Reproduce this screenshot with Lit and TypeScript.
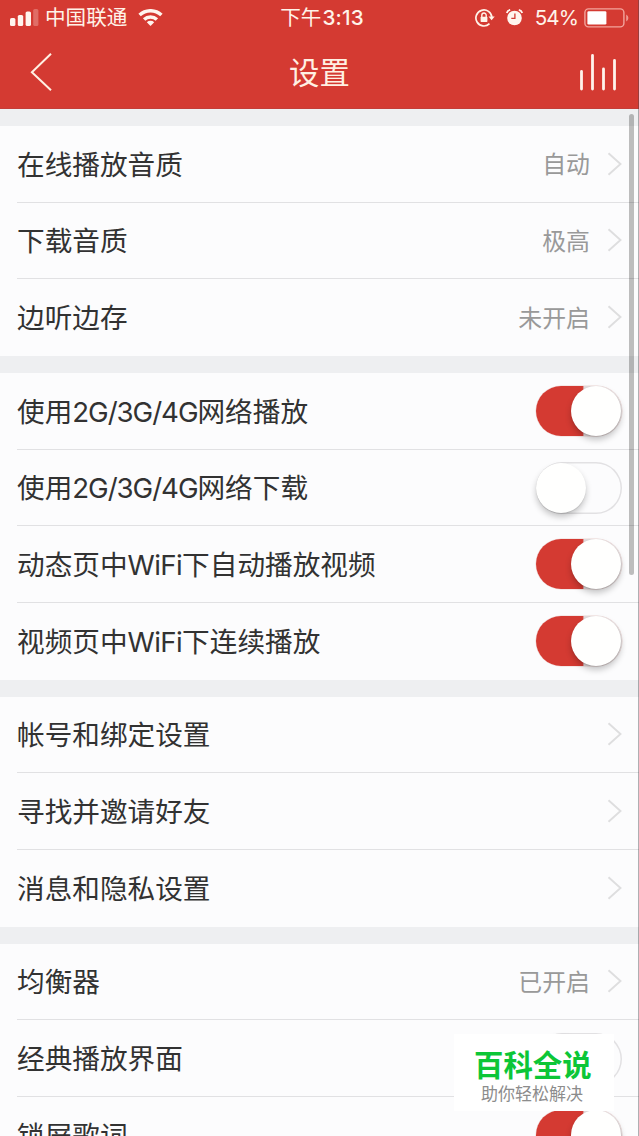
import { LitElement, html, css, svg } from "lit";
import { customElement, property } from "lit/decorators.js";
import { classMap } from "lit/directives/class-map.js";

interface Item {
  label: string;
  value?: string;
  on?: boolean;
}

const GROUPS: Item[][] = [
  [
    { label: "在线播放音质", value: "自动" },
    { label: "下载音质", value: "极高" },
    { label: "边听边存", value: "未开启" },
  ],
  [
    { label: "使用2G/3G/4G网络播放", on: true },
    { label: "使用2G/3G/4G网络下载", on: false },
    { label: "动态页中WiFi下自动播放视频", on: true },
    { label: "视频页中WiFi下连续播放", on: true },
  ],
  [{ label: "帐号和绑定设置" }, { label: "寻找并邀请好友" }, { label: "消息和隐私设置" }],
  [
    { label: "均衡器", value: "已开启" },
    { label: "经典播放界面", on: false },
    { label: "锁屏歌词", on: true },
  ],
];

@customElement("toggle-switch")
class ToggleSwitch extends LitElement {
  @property({ type: Boolean }) on = false;

  static styles = css`
    :host { display: block; flex: none; margin-top: 2px; }
    :host([on]) { margin-top: 0; }
    .track {
      box-sizing: border-box;
      display: flex;
      align-items: center;
      width: 86px;
      height: 52px;
      border-radius: 26px;
      background: #fcfcfd;
      box-shadow: inset 0 0 0 1.5px #e2e1e3;
    }
    .track.on {
      height: 50px;
      justify-content: flex-end;
      background: linear-gradient(90deg, #d43a32 54%, #e2dadb 56%);
      box-shadow: 0 0 0 0.5px #ecd5d4;
    }
    .knob {
      width: 50px;
      height: 50px;
      border-radius: 50%;
      background: #fffffe;
      box-shadow: 0 4px 6px rgba(0, 0, 0, 0.22), 0 1px 1px rgba(0, 0, 0, 0.1);
    }
    .on .knob { margin-right: 1px; }
  `;

  render() {
    return html`<div class=${classMap({ track: true, on: this.on })}><div class="knob"></div></div>`;
  }
}

@customElement("setting-row")
class SettingRow extends LitElement {
  @property({ attribute: false }) item!: Item;

  static styles = css`
    :host { display: block; padding-left: 17px; }
    .row {
      box-sizing: border-box;
      height: 100%;
      display: flex;
      align-items: center;
      justify-content: space-between;
      padding-right: 17px;
      border-bottom: 1px solid #e1e1e3;
    }
    :host(:last-child) .row { border-bottom-color: transparent; }
    .label { font-size: 27.65px; color: #323232; white-space: nowrap; padding-bottom: 2px; }
    .latin { letter-spacing: -1.05px; }
    .word { letter-spacing: -0.6px; }
    .end { display: flex; align-items: center; gap: 17px; }
    .value { font-size: 23.9px; color: #999; padding-bottom: 2px; }
    .chevron { display: block; }
  `;

  render() {
    const { label, value, on } = this.item;
    const parts = label.split(/([A-Za-z0-9/]+)/);
    return html`<div class="row">
      <span class="label">${parts.map((p, i) =>
        i % 2 ? html`<span class=${p === "WiFi" ? "word" : "latin"}>${p}</span>` : p
      )}</span>
      ${on !== undefined
        ? html`<toggle-switch ?on=${on}></toggle-switch>`
        : html`<div class="end">
            ${value ? html`<span class="value">${value}</span>` : ""}
            <svg class="chevron" width="15" height="24" viewBox="0 0 15 24" fill="none" stroke="#dededf" stroke-width="1.9">
              <path d="M1.5 1.2 13.5 12 1.5 22.8" />
            </svg>
          </div>`}
    </div>`;
  }
}

@customElement("status-bar")
class StatusBar extends LitElement {
  static styles = css`
    :host {
      display: grid;
      grid-template-columns: 1fr auto 1fr;
      align-items: center;
      height: 35px;
      padding: 0 10px 0 10px;
      color: #fff3e9;
      font-size: 20.6px;
      line-height: 35px;
    }
    .side { display: flex; align-items: center; }
    .right { justify-content: flex-end; }
    .carrier { margin: 0 11px 0 6px; }
    .time { margin-left: 5px; }
    .digits { font-weight: 550; letter-spacing: 0.2px; margin-left: 1px; }
    .alarm { margin: 0 12px 0 11px; }
    .percent { margin-right: 6px; letter-spacing: -0.9px; }
    svg { display: block; flex: none; }
  `;

  render() {
    return html`
      <div class="side">
        <svg width="29" height="18" viewBox="0 0 29 18" fill="#fff5ee">
          <rect x="0" y="9" width="5.4" height="8" rx="1.6" />
          <rect x="7.8" y="6" width="5.4" height="11" rx="1.6" />
          <rect x="15.6" y="2.5" width="5.4" height="14.5" rx="1.6" />
          <rect x="23.2" y="0" width="5.2" height="17" rx="1.6" opacity=".28" />
        </svg>
        <span class="carrier">中国联通</span>
        <svg width="25" height="18" viewBox="0 0 25 18" fill="none" stroke="#fff5ee" stroke-width="3.5">
          <path d="M1.6 6.1a15.8 15.8 0 0 1 21.8 0" />
          <path d="M6.1 10.5a9.4 9.4 0 0 1 12.8 0" />
          <path d="M8.8 13.3a5.4 5.4 0 0 1 7.4 0L12.5 17z" fill="#fff5ee" stroke="none" />
        </svg>
      </div>
      <div class="time">下午<span class="digits">3:13</span></div>
      <div class="side right">
        <svg width="20" height="18" viewBox="0 0 20 18" fill="none" stroke="#fff3e9" stroke-width="1.7">
          <path d="M16.9 8.5A8 8 0 1 0 14.5 14.7" />
          <path d="M13.5 7.6h6.2l-3.1 3.7z" fill="#fff3e9" stroke="none" />
          <path d="M6.8 8V6.2a2.2 2.2 0 0 1 4.4 0V8" stroke-width="1.4" />
          <rect x="5.6" y="7.7" width="6.8" height="5.3" rx=".7" fill="#fff3e9" stroke="none" />
        </svg>
        <svg class="alarm" width="17" height="18" viewBox="0 0 17 18">
          <circle cx="8.5" cy="9" r="7.3" fill="#fff5ee" />
          <path d="M.8 4Q1.2 1.6 4.2 .9M16.2 4Q15.8 1.6 12.8 .9" fill="none" stroke="#fff5ee" stroke-width="1.8" />
          <path d="M8.9 4.4v5H5.3" fill="none" stroke="#d43a32" stroke-width="1.3" />
        </svg>
        <span class="percent">54%</span>
        <svg width="45" height="20" viewBox="0 0 45 20">
          <rect x=".9" y=".9" width="39" height="18" rx="3.6" fill="none" stroke="#f2a49c" stroke-width="1.4" />
          <rect x="3.4" y="3.2" width="19" height="13.4" rx="1.3" fill="#fff" />
          <path d="M42.2 6.4q2.2 1.2 2.2 3.5t-2.2 3.5z" fill="#ee9a92" />
        </svg>
      </div>
    `;
  }
}

@customElement("app-root")
class AppRoot extends LitElement {
  static styles = css`
    :host {
      position: relative;
      display: flex;
      flex-direction: column;
      width: 639px;
      height: 1136px;
      overflow: hidden;
      background: #eeeff1;
      font-family: Inter, "Noto Sans CJK SC", sans-serif;
    }
    .header { flex: none; height: 108px; background: #d43a32; border-bottom: 1px solid #c43d38; }
    .nav {
      display: grid;
      grid-template-columns: 1fr auto 1fr;
      align-items: center;
      height: 73px;
      padding: 0 22px 0 30px;
    }
    .title { font-size: 30.4px; line-height: 73px; color: #fff0e3; margin: 2px 0 -2px -8px; }
    .bars { justify-self: end; }
    .group { flex: none; display: grid; grid-auto-rows: 76.67px; margin-top: 17px; background: #fcfcfd; }
    .scrollbar {
      position: absolute;
      left: 629px;
      top: 114px;
      width: 5px;
      height: 461px;
      border-radius: 2.5px;
      background: rgba(0, 0, 0, 0.25);
    }
    .edge { position: absolute; right: 0; top: 0; width: 1px; height: 100%; background: rgba(70, 70, 75, 0.42); }
    .badge {
      position: absolute;
      left: 454px;
      top: 1034px;
      width: 160px;
      height: 77px;
      box-sizing: border-box;
      padding: 14px 0 0 20px;
      background: #fff;
      white-space: nowrap;
    }
    .brand { font-size: 29.4px; line-height: 36px; font-weight: 700; color: #0cc637; }
    .slogan { margin-left: 7px; font-size: 17px; line-height: 20px; color: #8c8c8c; }
  `;

  render() {
    const bars = [
      [1.5, 18.5],
      [12.5, 2.5],
      [23.5, 16],
      [34.5, 7.5],
    ];
    return html`
      <header class="header">
        <status-bar></status-bar>
        <div class="nav">
          <svg width="23" height="40" viewBox="0 0 23 40" fill="none" stroke="#fff0e3" stroke-width="2">
            <path d="M21 1.7 1.9 20.2 21 38.3" />
          </svg>
          <span class="title">设置</span>
          <svg class="bars" width="37" height="38" viewBox="0 0 37 38" stroke="#fff3ec" stroke-width="2.8" stroke-linecap="round">
            ${bars.map(([x, y]) => svg`<path d="M${x} ${y}V36" />`)}
          </svg>
        </div>
      </header>
      ${GROUPS.map(
        (g) => html`<section class="group">${g.map((item) => html`<setting-row .item=${item}></setting-row>`)}</section>`
      )}
      <div class="scrollbar"></div>
      <div class="badge">
        <div class="brand">百科全说</div>
        <div class="slogan">助你轻松解决</div>
      </div>
      <div class="edge"></div>
    `;
  }
}
